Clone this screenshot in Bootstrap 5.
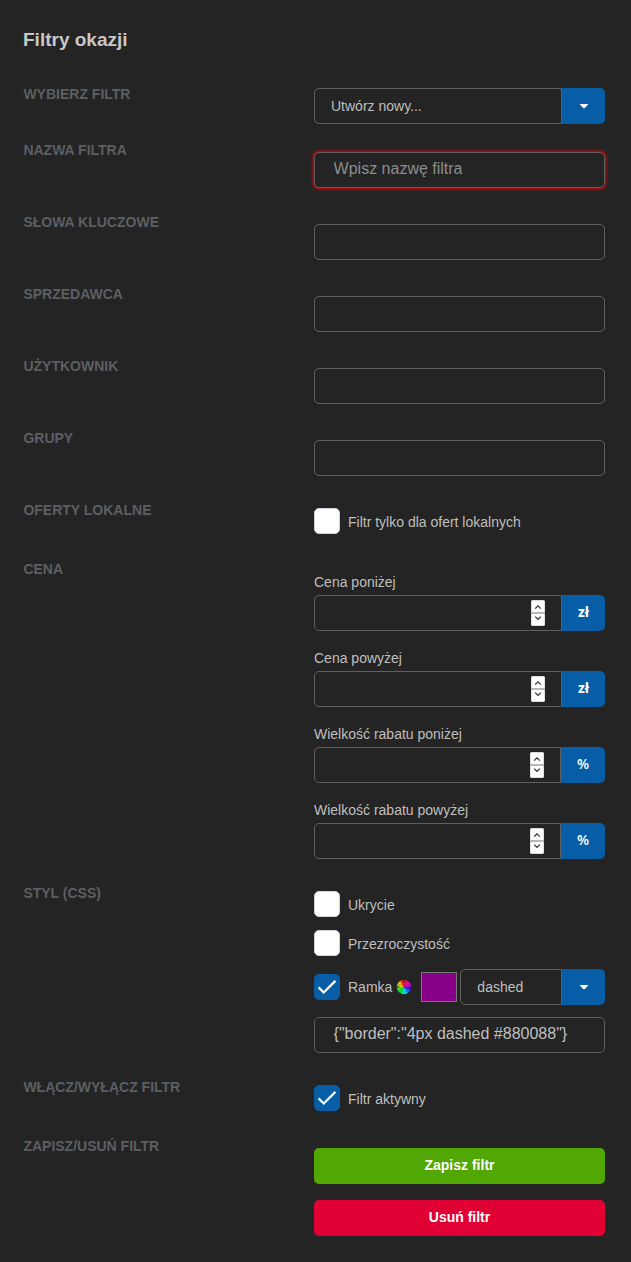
<!DOCTYPE html>
<html lang="pl" data-bs-theme="dark">
<head>
<meta charset="utf-8">
<meta name="viewport" content="width=device-width, initial-scale=1">
<title>Filtry okazji</title>
<link href="https://cdn.jsdelivr.net/npm/bootstrap@5.3.0/dist/css/bootstrap.min.css" rel="stylesheet">
<style>
body{background:#242424;color:#bfbfbf;font:14px/20px "Liberation Sans",Arial,sans-serif}
.filters{padding:28px 26px 0 23px}
.page-title{font-size:19px;line-height:24px;font-weight:700;margin:0 0 32px;color:#c8c8c8}
.row-label{color:#5c5f63;font-weight:700;font-size:14px;padding-left:.4px}
.r-sel{height:56px;--top:4px}
.r-txt{height:72px;--top:12px}
.r-chk{height:59px;--top:8px}
.r-price{height:324px;--top:13px}
.r-style{height:194px;--top:8px}
.r-btn{height:126px;--top:12px}
.field-col{padding-top:var(--top)}
.field{height:36px;border:1px solid #5f5f5f;border-radius:5px;background:#242424!important;color:#bfbfbf;font-size:16px;line-height:20px;padding:6px 18.600px 8px;box-shadow:none!important}
.field::placeholder{color:#8b8d90;opacity:1}
.field.invalid{box-shadow:0 0 3px 1px #f00000!important}
.pick{height:36px;flex-wrap:nowrap}
.pick-value{flex:1;border:1px solid #5f5f5f;border-right-width:1px;border-radius:5px 0 0 5px;padding:0 16px}
.addon{background:#085ea6;color:#fff;font-weight:700;border-radius:0 5px 5px 0;width:43px}
.addon.pct{width:44px;font-weight:600}
.unit{font-family:"Open Sans","Noto Sans",sans-serif;padding-bottom:2px}
.box{width:26px;height:26px;flex:none;border-radius:5px;background:#fff;border:1px solid #d1d5db}
.box.on{background:#085ea6;border-color:#085ea6}
.box svg{display:block;margin:-1px}
.check-label{margin-left:8px}
.drop{padding-top:2px}
.cap{margin-bottom:3px}
.price-item{margin-bottom:17px}
.opt{height:26px;margin-bottom:13px}
.frame-line{height:36px}
.wheel{margin:0 9px 0 4px;flex:none}
.swatch{width:36px;height:30px;flex:none;background:#808;border:1px solid #777}
.frame-pick{margin-left:3px}
.css-field{margin-top:12px}
.action{height:36px;border-radius:5px;color:#fff!important;font-size:14px;font-weight:700;border:0;line-height:20px;padding:7px 0 9px}
.save{background:#51a704!important}
.remove{background:#e00034!important}
</style>
</head>
<body>
<svg class="d-none">
<symbol id="spin" viewBox="0 0 14 26"><rect x="0" y="0" width="14" height="26" rx="1.500" fill="#b8b8b8"/><rect x=".4" y=".4" width="13.200" height="11.600" rx="1" fill="#fff"/><rect x=".4" y="14" width="13.200" height="11.600" rx="1" fill="#fff"/><path d="M4.200 8.600 7 5.800l2.800 2.800M4.200 16.600 7 19.400l2.800-2.800" fill="none" stroke="#2e3436" stroke-width="1.300"/></symbol>
<symbol id="tick" viewBox="0 0 26 26"><path d="m4.600 13.400 5.100 5.100L21.400 6.900" fill="none" stroke="#fff" stroke-width="2.200"/></symbol>
<symbol id="caret" viewBox="0 0 10 5"><path d="M.5 0h9L6 3.700q-1 1-2 0z" fill="#fff"/></symbol>
</svg>
<main class="filters">
<h1 class="page-title">Filtry okazji</h1>
<div class="row g-0 r-sel"><div class="col-6 row-label">WYBIERZ FILTR</div><div class="col-6 field-col">
<div class="pick d-flex"><div class="pick-value d-flex align-items-center">Utwórz nowy...</div><div class="addon d-flex align-items-center justify-content-center"><svg width="10" height="5"><use href="#caret"/></svg></div></div></div></div>
<div class="row g-0 r-txt"><div class="col-6 row-label">NAZWA FILTRA</div><div class="col-6 field-col"><input class="form-control field invalid" placeholder="Wpisz nazwę filtra"></div></div>
<div class="row g-0 r-txt"><div class="col-6 row-label">SŁOWA KLUCZOWE</div><div class="col-6 field-col"><input class="form-control field"></div></div>
<div class="row g-0 r-txt"><div class="col-6 row-label">SPRZEDAWCA</div><div class="col-6 field-col"><input class="form-control field"></div></div>
<div class="row g-0 r-txt"><div class="col-6 row-label">UŻYTKOWNIK</div><div class="col-6 field-col"><input class="form-control field"></div></div>
<div class="row g-0 r-txt"><div class="col-6 row-label">GRUPY</div><div class="col-6 field-col"><input class="form-control field"></div></div>
<div class="row g-0 r-chk"><div class="col-6 row-label">OFERTY LOKALNE</div><div class="col-6 field-col"><div class="d-flex align-items-center"><span class="box"></span><span class="check-label drop">Filtr tylko dla ofert lokalnych</span></div></div></div>
<div class="row g-0 r-price"><div class="col-6 row-label">CENA</div><div class="col-6 field-col">
<div class="price-item"><div class="cap">Cena poniżej</div><div class="pick d-flex"><div class="pick-value d-flex align-items-center justify-content-end"><svg width="14" height="26"><use href="#spin"/></svg></div><div class="addon unit d-flex align-items-center justify-content-center">zł</div></div></div>
<div class="price-item"><div class="cap">Cena powyżej</div><div class="pick d-flex"><div class="pick-value d-flex align-items-center justify-content-end"><svg width="14" height="26"><use href="#spin"/></svg></div><div class="addon unit d-flex align-items-center justify-content-center">zł</div></div></div>
<div class="price-item"><div class="cap">Wielkość rabatu poniżej</div><div class="pick d-flex"><div class="pick-value d-flex align-items-center justify-content-end"><svg width="14" height="26"><use href="#spin"/></svg></div><div class="addon pct unit d-flex align-items-center justify-content-center">%</div></div></div>
<div><div class="cap">Wielkość rabatu powyżej</div><div class="pick d-flex"><div class="pick-value d-flex align-items-center justify-content-end"><svg width="14" height="26"><use href="#spin"/></svg></div><div class="addon pct unit d-flex align-items-center justify-content-center">%</div></div></div>
</div></div>
<div class="row g-0 r-style"><div class="col-6 row-label">STYL (CSS)</div><div class="col-6 field-col">
<div class="d-flex align-items-center opt"><span class="box"></span><span class="check-label drop">Ukrycie</span></div>
<div class="d-flex align-items-center opt"><span class="box"></span><span class="check-label drop">Przezroczystość</span></div>
<div class="d-flex align-items-center frame-line"><span class="box on"><svg width="26" height="26"><use href="#tick"/></svg></span><span class="check-label">Ramka</span>
<svg class="wheel" width="16" height="16" viewBox="-8 -8 16 16"><path d="M0 0 0-7.200A7.200 7.200 0 0 1 3.600-6.240z" fill="#e9114c"/><path d="M0 0 3.600-6.240A7.200 7.200 0 0 1 6.240-3.600z" fill="#ee08a0"/><path d="M0 0 6.240-3.600A7.200 7.200 0 0 1 7.200 0z" fill="#c60ce8"/><path d="M0 0H7.200A7.200 7.200 0 0 1 6.240 3.600z" fill="#3d12ed"/><path d="M0 0 6.240 3.600A7.200 7.200 0 0 1 3.600 6.240z" fill="#1769ed"/><path d="M0 0 3.600 6.240A7.200 7.200 0 0 1 0 7.200z" fill="#17cce3"/><path d="M0 0V7.200A7.200 7.200 0 0 1-3.600 6.240z" fill="#10df8c"/><path d="M0 0-3.600 6.240A7.200 7.200 0 0 1-6.240 3.600z" fill="#0fe034"/><path d="M0 0-6.240 3.600A7.200 7.200 0 0 1-7.200 0z" fill="#62df17"/><path d="M0 0H-7.200A7.200 7.200 0 0 1-6.240-3.600z" fill="#c4d80f"/><path d="M0 0-6.240-3.600A7.200 7.200 0 0 1-3.600-6.240z" fill="#f0b414"/><path d="M0 0-3.600-6.240A7.200 7.200 0 0 1 0-7.200z" fill="#ed261a"/><g fill="none" stroke="#222" stroke-width=".7"><circle cy="-6" r="1"/><circle cx="6" r="1"/><circle cx="-6" r="1"/></g></svg>
<span class="swatch"></span>
<div class="pick d-flex flex-fill frame-pick"><div class="pick-value d-flex align-items-center">dashed</div><div class="addon d-flex align-items-center justify-content-center"><svg width="10" height="5"><use href="#caret"/></svg></div></div></div>
<input class="form-control field css-field" value="{&quot;border&quot;:&quot;4px dashed #880088&quot;}">
</div></div>
<div class="row g-0 r-chk"><div class="col-6 row-label">WŁĄCZ/WYŁĄCZ FILTR</div><div class="col-6 field-col"><div class="d-flex align-items-center"><span class="box on"><svg width="26" height="26"><use href="#tick"/></svg></span><span class="check-label drop">Filtr aktywny</span></div></div></div>
<div class="row g-0 r-btn"><div class="col-6 row-label">ZAPISZ/USUŃ FILTR</div><div class="col-6 field-col d-grid gap-3 align-content-start"><button class="btn action save">Zapisz filtr</button><button class="btn action remove">Usuń filtr</button></div></div>
</main>
<script src="https://cdn.jsdelivr.net/npm/bootstrap@5.3.0/dist/js/bootstrap.bundle.min.js"></script>
</body>
</html>
